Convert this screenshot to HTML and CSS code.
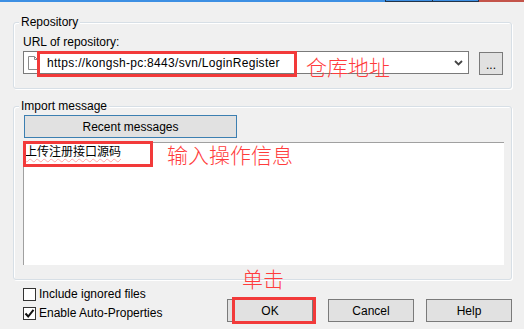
FILE: index.html
```html
<!DOCTYPE html>
<html>
<head>
<meta charset="utf-8">
<link rel="stylesheet" href="styles.css">
</head>
<body>
<div class="titlebar"><span class="tb-main"></span><span class="tb-btn"></span><span class="tb-btn"></span><span class="tb-close"></span></div>
<div class="dialog">
  <div class="group repo">
    <div class="legend">Repository</div>
    <div class="label">URL of repository:</div>
    <div class="url-row">
      <div class="combo">
        <svg class="fileicon" width="10" height="14" viewBox="0 0 10 14"><path d="M0.5 0.5 H6.5 L9.5 3.5 V13.5 H0.5 Z" fill="#fff" stroke="#8a8a8a"/><path d="M6.5 0.5 V3.5 H9.5" fill="none" stroke="#8a8a8a"/></svg>
        <span class="url">https://kongsh-pc:8443/svn/LoginRegister</span>
        <svg class="chev" width="9" height="6" viewBox="0 0 9 6"><path d="M1 1 L4.5 4.5 L8 1" fill="none" stroke="#444" stroke-width="1.8"/></svg>
      </div>
      <div class="btn browse">...</div>
    </div>
  </div>
  <div class="group msg">
    <div class="legend">Import message</div>
    <div class="btn recent">Recent messages</div>
    <div class="textarea"><span class="spell">上传注册接口源码</span></div>
  </div>
  <div class="bottom">
    <div class="checks">
      <div class="check"><span class="cb"></span><span>Include ignored files</span></div>
      <div class="check"><span class="cb"><svg width="11" height="11" viewBox="0 0 11 11"><path d="M1.5 5.5 L4.2 8.5 L9.5 1.8" fill="none" stroke="#111" stroke-width="2"/></svg></span><span>Enable Auto-Properties</span></div>
    </div>
    <div class="buttons">
      <div class="btn act ok">OK</div>
      <div class="btn act">Cancel</div>
      <div class="btn act">Help</div>
    </div>
  </div>
</div>
<div class="redbox box-url"></div>
<div class="redbox box-msg"></div>
<div class="redbox box-ok"></div>
<div class="note note-url">仓库地址</div>
<div class="note note-msg">输入操作信息</div>
<div class="note note-ok">单击</div>
</body>
</html>
```
FILE: styles.css
```css
* { box-sizing: border-box; }
body {
  margin: 0;
  width: 524px;
  height: 329px;
  overflow: hidden;
  position: relative;
  background: #f0f0f0;
  font: 12px/14px "Liberation Sans", Arial, "Noto Sans CJK SC", sans-serif;
  color: #000;
}
.titlebar { display: flex; height: 2px; }
.tb-main { flex: 0 0 385px; background: #3d8fe3; }
.tb-btn { flex: 0 0 47px; background: #3d8fe3; border-left: 1px solid #22344a; border-bottom: 1px solid #22344a; }
.tb-btn + .tb-btn { flex-basis: 46px; }
.tb-close { flex: 1; background: #c4544a; border-left: 1px solid #22344a; }

.dialog { padding: 20px 12px 0 13px; }
.group {
  border: 1px solid #d7dfe6;
  border-radius: 3px;
  box-shadow: 1px 1px 0 #fff, inset 1px 1px 0 #fff;
  padding: 0 8px 0 9px;
}
.repo { height: 67px; }
.msg { height: 174px; margin-top: 17px; }
.legend {
  width: fit-content;
  margin: -8px 0 0 -4px;
  padding: 0 2px;
  background: #f0f0f0;
  line-height: 14px;
}
.label { margin-top: 6px; }
.url-row { display: flex; align-items: flex-start; margin-top: 2px; }
.combo {
  width: 447px;
  height: 23px;
  background: #fff;
  border: 1px solid #7a7a7a;
  display: flex;
  align-items: center;
  padding: 0 5px 0 4px;
}
.fileicon { flex: none; margin-right: 9px; }
.url { flex: 1; white-space: nowrap; letter-spacing: 0.3px; }
.chev { flex: none; margin-top: 1px; }
.btn {
  background: #e1e1e1;
  border: 1px solid #7a7a7a;
  display: flex;
  align-items: center;
  justify-content: center;
}
.browse { width: 24px; height: 23px; margin: 1px 0 0 10px; line-height: 12px; padding-top: 2px; }
.recent { width: 213px; height: 23px; margin: 2px 0 0 1px; border-color: #3c7fb1; }
.textarea {
  width: 481px;
  height: 123px;
  margin-top: 4px;
  background: #fff;
  border-top: 1px solid #a0a0a0;
  border-left: 1px solid #a0a0a0;
  padding: 0 0 0 1px;
  line-height: 16px;
  font-family: "Noto Sans CJK SC", sans-serif;
  font-size: 12px;
}
.spell { text-decoration: underline wavy rgba(255, 80, 80, 0.45); text-decoration-thickness: 1px; text-underline-offset: 2px; }

.bottom { display: flex; justify-content: space-between; }
.checks { display: flex; flex-direction: column; gap: 6px; padding: 8px 0 0 10px; }
.check { display: flex; align-items: center; height: 13px; line-height: 13px; }
.cb {
  width: 13px; height: 13px;
  background: #fff;
  border: 1px solid #333;
  margin-right: 3px;
  display: flex; align-items: center; justify-content: center;
}
.buttons { display: flex; gap: 12px; padding-top: 19px; }
.act { width: 86px; height: 23px; }
.ok { margin-right: 3px; }

.redbox { position: absolute; border: 3px solid #f23a3a; }
.box-url { left: 37px; top: 51px; width: 260px; height: 26px; }
.box-msg { left: 23px; top: 141px; width: 130px; height: 26px; }
.box-ok { left: 232px; top: 297px; width: 84px; height: 27px; }
.note {
  position: absolute;
  color: #ff3c3c;
  font: 300 21px/22px "Noto Sans CJK SC", sans-serif;
  white-space: nowrap;
}
.note-url { left: 306px; top: 55px; }
.note-msg { left: 167px; top: 143px; }
.note-ok { left: 242px; top: 267px; }
```
